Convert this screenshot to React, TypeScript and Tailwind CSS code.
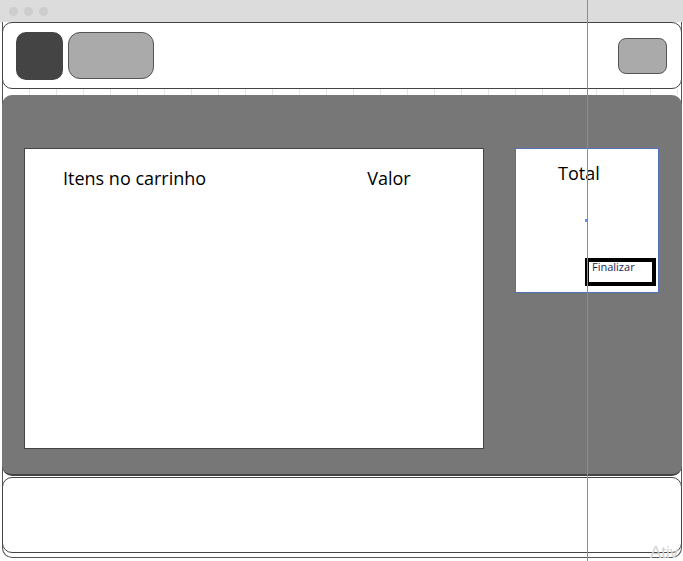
export default function App() {
  return (
    <div className="relative w-[683px] h-[561px] overflow-hidden bg-white font-['Open_Sans','Liberation_Sans',sans-serif]">
      {/* title bar */}
      <div className="h-[22px] bg-[#dcdcdc] flex items-center gap-[6px] pl-[9px]">
        <span className="w-[9px] h-[9px] rounded-full bg-[#cdcdcd]" />
        <span className="w-[9px] h-[9px] rounded-full bg-[#cdcdcd]" />
        <span className="w-[9px] h-[9px] rounded-full bg-[#cdcdcd]" />
      </div>

      {/* window */}
      <div className="ml-[2px] mr-[1px] h-[536px] border-x border-b border-[#555] rounded-b-[10px] flex flex-col">
        {/* header */}
        <div className="h-[67px] -ml-px -mr-px border border-[#444] rounded-[10px] bg-white flex items-center pl-[13px] pr-[14px]">
          <div className="w-[47px] h-[48px] rounded-[10px] bg-[#444]" />
          <div className="ml-[5px] w-[86px] h-[47px] rounded-[12px] bg-[#aaa] border border-[#555]" />
          <div className="ml-auto w-[49px] h-[36px] rounded-[8px] bg-[#aaa] border border-[#555]" />
        </div>

        {/* ruler strip */}
        <div className="h-[6px] bg-[repeating-linear-gradient(90deg,transparent_0_26px,#e4e4e4_26px_27px)]" />

        {/* main panel */}
        <div className="h-[381px] -ml-px -mr-px bg-[#777] rounded-[10px] border-b-2 border-[#444] flex items-start pt-[53px] pl-[22px]">
          <div className="w-[460px] h-[301px] bg-white border border-[#444] flex text-[18px] leading-none text-black pt-[20px]">
            <span className="ml-[38px]">Itens no carrinho</span>
            <span className="ml-[161px]">Valor</span>
          </div>
          <div className="ml-[31px] w-[144px] h-[145px] bg-white border border-[#5470b8] flex flex-col">
            <span className="text-[18px] leading-none text-black pl-[42px] pt-[15px]">Total</span>
            <div className="mt-auto mb-[6px] ml-auto mr-[2px] w-[71px] h-[28px] border-4 border-black pl-[3px]">
              <span className="block text-[11px] leading-none text-[#1a2550] -mt-px">Finalizar</span>
            </div>
          </div>
        </div>

        {/* footer */}
        <div className="mt-px h-[76px] -ml-px -mr-px border border-[#444] rounded-[10px] bg-white" />
      </div>

      {/* guide line overlay */}
      <div className="absolute left-[587px] top-0 w-px h-[561px] bg-[#6a8ee6]" />
      <div className="absolute left-[585px] top-[219px] w-[3px] h-[3px] bg-[#6a8ee6]" />

      {/* watermark */}
      <span className="absolute left-[650px] top-[544px] text-[17px] leading-none text-[#d4d4d4] font-['Liberation_Sans',sans-serif]">Ativ</span>
    </div>
  );
}
